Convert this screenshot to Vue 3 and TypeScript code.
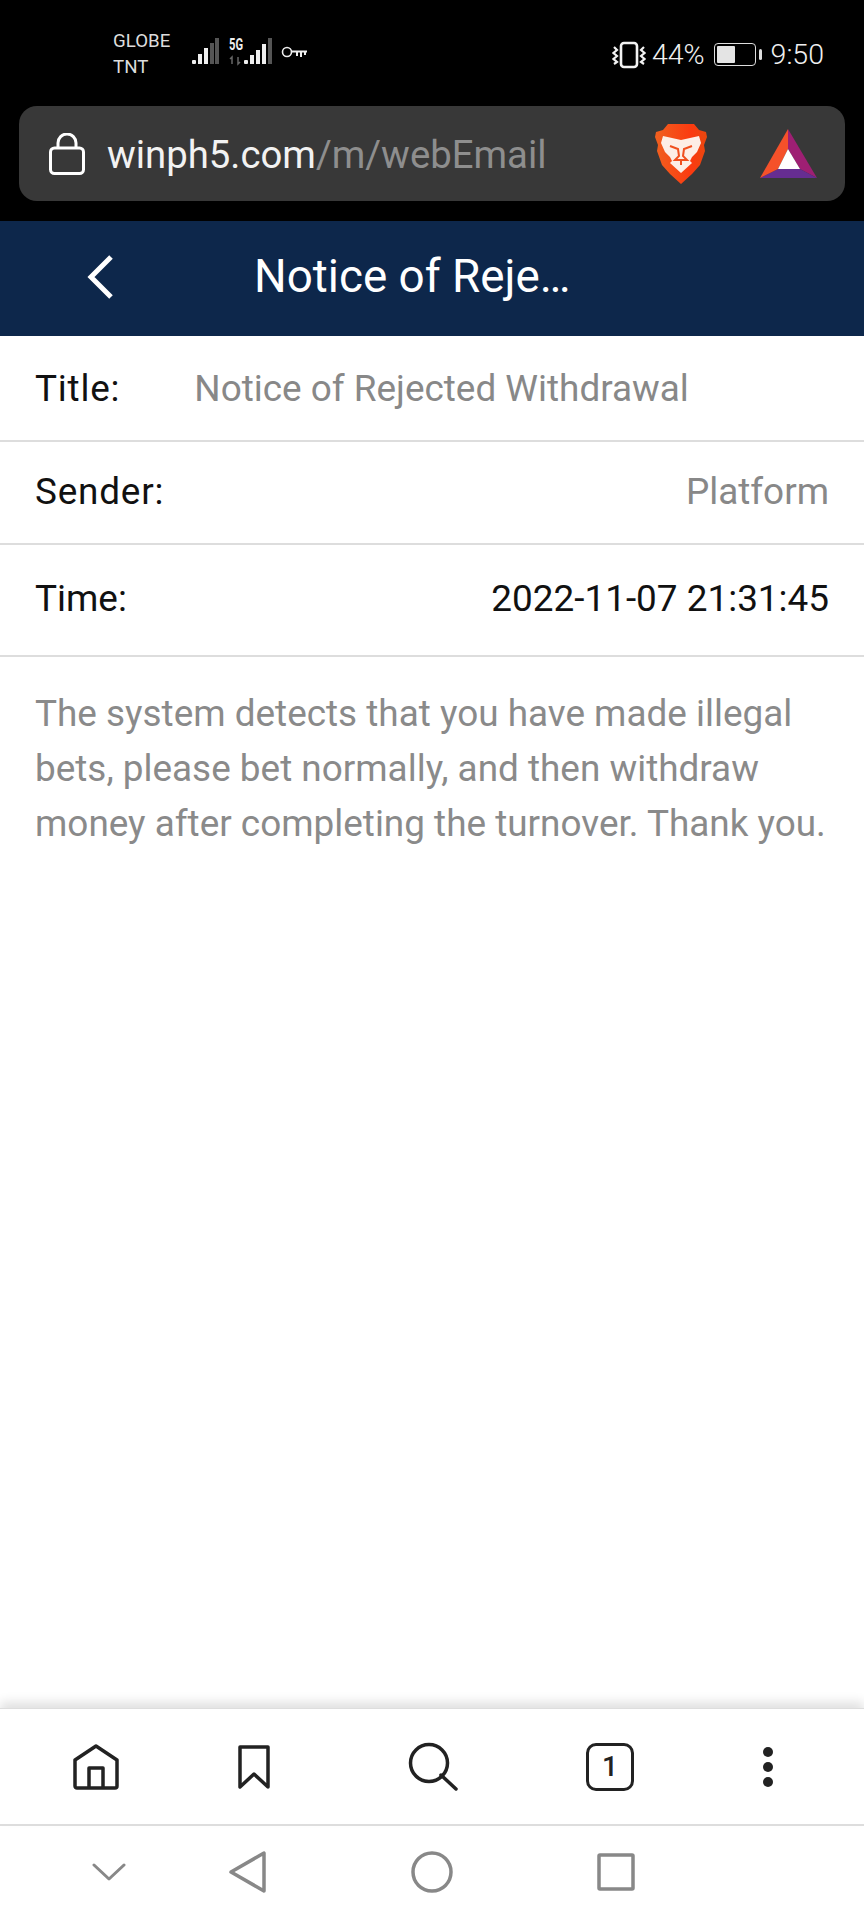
<script setup lang="ts">
const rows = [
  { label: 'Sender:', value: 'Platform', cls: 'row-sender', dark: false },
  { label: 'Time:', value: '2022-11-07 21:31:45', cls: 'row-time', dark: true }
]
</script>

<template>
  <div class="phone">
    <div class="statusbar">
      <div class="carrier">
        <span>GLOBE</span>
        <span>TNT</span>
      </div>
      <svg class="signal" width="120" height="30" viewBox="190 36 120 30">
        <g fill="#eee">
          <rect x="192" y="60" width="4" height="4" rx="1" />
          <rect x="198" y="54" width="4" height="10" />
          <rect x="204" y="48" width="4" height="16" />
        </g>
        <g fill="#555">
          <rect x="210" y="43" width="4" height="21" />
          <rect x="215" y="38" width="4" height="26" />
        </g>
        <text x="229" y="50" class="five-g" textLength="14" lengthAdjust="spacingAndGlyphs">5G</text>
        <path d="M232 64v-7l-2 2M238 57v7l2-2" fill="none" stroke="#666" stroke-width="1.500" />
        <g fill="#eee">
          <rect x="244" y="60" width="4" height="4" rx="1" />
          <rect x="250" y="55" width="4" height="9" />
          <rect x="256" y="50" width="4" height="14" />
          <rect x="262" y="44" width="4" height="20" />
        </g>
        <rect x="268" y="38" width="4" height="26" fill="#555" />
        <circle cx="287" cy="52" r="4.500" fill="none" stroke="#eee" stroke-width="1.600" />
        <path d="M292 51.500h15M297 51v5M301 51v6M305 51v4" fill="none" stroke="#eee" stroke-width="2" />
      </svg>
      <div class="status-right">
        <svg width="34" height="28" viewBox="0 0 34 28" fill="none" stroke="#f2f2f2">
          <rect x="9" y="2" width="16" height="24" rx="3" stroke-width="2.600" />
          <path d="M2 6l3 3-3.500 3 3.500 3-3.500 3 3.500 3-3 2M32 6l-3 3 3.500 3-3.500 3 3.500 3-3.500 3 3 2" stroke-width="2.200" />
        </svg>
        <span class="pct">44%</span>
        <div class="battery">
          <div class="battery-body"><div class="battery-fill"></div></div>
          <div class="battery-tip"></div>
        </div>
        <span class="clock">9:50</span>
      </div>
    </div>

    <div class="urlwrap">
      <div class="urlbar">
        <svg class="lock" width="36" height="42" viewBox="0 0 36 42" fill="none" stroke="#fff" stroke-width="3">
          <path d="M9 15v-5a9 9 0 0 1 18 0v5" />
          <rect x="1.500" y="15" width="33" height="25.500" rx="4" />
        </svg>
        <div class="url"><span class="host">winph5.com</span><span class="path">/m/webEmail</span></div>
        <svg class="brave" width="52" height="62" viewBox="0 0 52 62">
          <defs>
            <linearGradient id="braveGrad" x1="0" y1="0" x2="1" y2="0">
              <stop offset="0" stop-color="#f0601f" />
              <stop offset="0.7" stop-color="#fb3a10" />
              <stop offset="1" stop-color="#e8480f" />
            </linearGradient>
          </defs>
          <path d="M13 1h26l5 6 7 2 1 5-3 8 1 6-5 14-8 9-11 10-11-10-8-9-5-14 1-6-3-8 1-5 7-2z" fill="url(#braveGrad)" />
          <path d="M8 13l9 2 9 2 9-2 9-2 2 7-4 9-5 5-2 4 2 2-11 10-11-10 2-2-2-4-5-5-4-9z" fill="#fdeee6" />
          <path d="M15 23l8 3 1 7-4 4h12l-4-4 1-7 8-3M26 37v5" fill="none" stroke="#f0501f" stroke-width="2" />
        </svg>
        <svg class="bat" width="57" height="49" viewBox="0 0 57 49">
          <path d="M28 0L57 49 40 40 28 20z" fill="#9e1f73" />
          <path d="M0 49L18 40H40L57 49z" fill="#662d91" />
          <path d="M28 0L0 49 18 40 28 20z" fill="#f5512a" />
          <path d="M28 20L18 40H40z" fill="#fff" />
        </svg>
      </div>
    </div>

    <header class="navbar">
      <svg class="back" width="28" height="44" viewBox="0 0 28 44" fill="none" stroke="#fff" stroke-width="5">
        <path d="M25 2L5 22l20 20" />
      </svg>
      <h1 class="nav-title">Notice of Reje…</h1>
    </header>

    <main class="content">
      <div class="row row-title">
        <span class="label spaced">Title:</span>
        <span class="title-value">Notice of Rejected Withdrawal</span>
      </div>
      <div v-for="r in rows" :key="r.label" class="row" :class="r.cls">
        <span class="label">{{ r.label }}</span>
        <span class="value" :class="{ dark: r.dark }">{{ r.value }}</span>
      </div>
      <p class="message">The system detects that you have made illegal bets, please bet normally, and then withdraw money after completing the turnover. Thank you.</p>
    </main>

    <nav class="toolbar">
      <svg class="tool-home" width="46" height="46" viewBox="0 0 46 46" fill="none" stroke="#222" stroke-width="3.500" stroke-linejoin="round">
        <path d="M2 16L23 2l21 14v26a2 2 0 0 1-2 2H4a2 2 0 0 1-2-2z" />
        <path d="M16 44V24h14v20" />
      </svg>
      <svg class="tool-mark" width="32" height="44" viewBox="0 0 32 44" fill="none" stroke="#222" stroke-width="3.500" stroke-linejoin="round">
        <path d="M2 2h28v40L16 29 2 42z" />
      </svg>
      <svg class="tool-search" width="50" height="50" viewBox="0 0 50 50" fill="none" stroke="#222" stroke-width="3.500" stroke-linecap="round">
        <circle cx="21" cy="21" r="18.500" />
        <path d="M33 33l15 14" />
      </svg>
      <div class="tabs">1</div>
      <div class="dots"><i></i><i></i><i></i></div>
    </nav>

    <div class="sysnav">
      <svg width="34" height="20" viewBox="0 0 34 20" fill="none" stroke="#888" stroke-width="3" stroke-linecap="round" stroke-linejoin="round">
        <path d="M2 3l15 14L32 3" />
      </svg>
      <svg class="sys-back" width="38" height="42" viewBox="0 0 38 42" fill="none" stroke="#888" stroke-width="3.500" stroke-linejoin="round">
        <path d="M35 2v38L2 21z" />
      </svg>
      <svg class="sys-home" width="42" height="42" viewBox="0 0 42 42" fill="none" stroke="#888" stroke-width="3.500">
        <circle cx="21" cy="21" r="19" />
      </svg>
      <svg class="sys-recent" width="38" height="38" viewBox="0 0 38 38" fill="none" stroke="#888" stroke-width="3.500" stroke-linejoin="round">
        <rect x="2" y="2" width="34" height="34" rx="1" />
      </svg>
    </div>
  </div>
</template>

<style scoped>
.phone {
  width: 864px;
  height: 1920px;
  display: flex;
  flex-direction: column;
  background: #fff;
  font-family: Roboto, "Liberation Sans", sans-serif;
}

.statusbar {
  height: 105px;
  background: #000;
  display: flex;
  align-items: flex-start;
  padding: 28px 40px 0 113px;
  box-sizing: border-box;
  color: #f0f0f0;
}

.carrier {
  display: flex;
  flex-direction: column;
  font-size: 18.700px;
  line-height: 26px;
  width: 77px;
  color: #ddd;
}

.signal {
  margin-top: 8px;
}

.five-g {
  font-size: 16px;
  font-weight: 700;
  fill: #eee;
}

.status-right {
  margin-left: auto;
  display: flex;
  align-items: center;
  margin-top: 10px;
}

.pct {
  font-size: 28.500px;
  font-weight: 300;
  margin-left: 6px;
}

.battery {
  display: flex;
  align-items: center;
  margin-left: 9px;
}

.battery-body {
  width: 42px;
  height: 23px;
  border: 1.500px solid #ddd;
  border-radius: 4px;
  padding: 2px;
  box-sizing: border-box;
}

.battery-fill {
  width: 18px;
  height: 100%;
  background: #e4e4e4;
  border-radius: 1px;
}

.battery-tip {
  width: 3px;
  height: 11px;
  background: #ddd;
  border-radius: 2px;
  margin-left: 3px;
}

.clock {
  font-size: 28.500px;
  font-weight: 300;
  margin-left: 9px;
}

.urlwrap {
  height: 116px;
  background: #000;
  padding: 1px 19px 0;
  box-sizing: border-box;
}

.urlbar {
  height: 95px;
  background: #383838;
  border-radius: 18px;
  display: flex;
  align-items: center;
  padding: 0 28px 0 30px;
}

.lock {
  flex: none;
  margin-right: 22px;
}

.url {
  font-size: 38.300px;
  flex: 1;
  white-space: nowrap;
  padding-top: 2px;
}

.host {
  color: #f2f2f2;
}

.path {
  color: #8e8e8e;
}

.brave {
  flex: none;
}

.bat {
  flex: none;
  margin-left: 53px;
}

.navbar {
  height: 115px;
  background: #0d274b;
  display: flex;
  align-items: center;
  padding: 0 0 4px 86px;
  box-sizing: border-box;
}

.nav-title {
  margin: 0 0 0 140px;
  color: #fff;
  font-size: 45.800px;
  font-weight: 400;
}

.content {
  flex: 1;
}

.row {
  display: flex;
  justify-content: space-between;
  align-items: center;
  padding: 0 35px;
  border-bottom: 2px solid #ddd;
  font-size: 36.900px;
  box-sizing: border-box;
}

.row-title {
  height: 106px;
  justify-content: flex-start;
}

.row-sender {
  height: 103px;
  padding-bottom: 2px;
}

.row-time {
  height: 112px;
  padding-bottom: 4px;
}

.label {
  color: #111;
}

.label.spaced,
.row-sender .label {
  letter-spacing: 0.8px;
}

.title-value {
  color: #888;
  margin-left: 74px;
}

.value {
  color: #888;
}

.value.dark {
  color: #111;
}

.message {
  margin: 0;
  padding: 29px 35px 0;
  font-size: 36.900px;
  line-height: 55px;
  color: #8a8a8a;
}

.toolbar {
  height: 116px;
  display: flex;
  align-items: center;
  padding-left: 73px;
  border-top: 1px solid #ddd;
  box-sizing: border-box;
  box-shadow: 0 -6px 10px rgba(0, 0, 0, 0.12);
}

.tool-mark {
  margin-left: 119px;
}

.tool-search {
  margin-left: 138px;
}

.tabs {
  margin-left: 128px;
  width: 48px;
  height: 48px;
  border: 3.500px solid #222;
  border-radius: 10px;
  box-sizing: border-box;
  display: flex;
  align-items: center;
  justify-content: center;
  font-size: 28px;
  font-weight: 500;
  color: #222;
}

.dots {
  margin-left: 129px;
  display: flex;
  flex-direction: column;
  gap: 5px;
}

.dots i {
  display: block;
  width: 10px;
  height: 10px;
  border-radius: 50%;
  background: #222;
}

.sysnav {
  height: 96px;
  display: flex;
  align-items: center;
  padding: 0 0 3px 92px;
  border-top: 2px solid #ddd;
  box-sizing: border-box;
}

.sys-back {
  margin-left: 103px;
}

.sys-home {
  margin-left: 144px;
}

.sys-recent {
  margin-left: 144px;
}
</style>

<style>
html,
body {
  margin: 0;
  background: #fff;
}
</style>
